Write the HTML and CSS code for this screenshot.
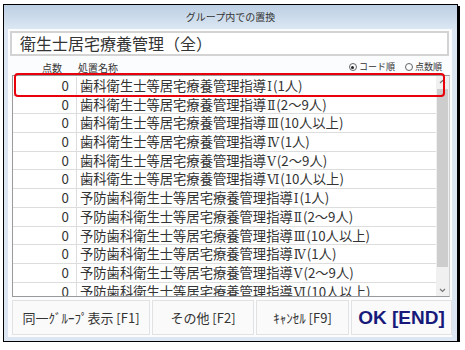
FILE: index.html
```html
<!DOCTYPE html>
<html>
<head>
    <meta charset="UTF-8">
    <title>グループ内での置換</title>
    <link rel="stylesheet" href="styles.css">
</head>
<body>
    <div class="window">
        <div class="title-bar">グループ内での置換</div>
        <div class="panel">
            <div class="group-name">衛生士居宅療養管理（全）</div>

            <div class="options">
                <span class="col-score">点数</span>
                <span class="col-name">処置名称</span>
                <span class="sort">
                    <span class="radio checked"></span>コード順
                    <span class="radio"></span>点数順
                </span>
            </div>

            <div class="list">
                <div class="rows" id="rows"></div>
                <div class="scrollbar">
                    <svg class="arrow" width="13" height="12" viewBox="0 0 13 12">
                        <polyline points="4,7 6.5,4.5 9,7" fill="none" stroke="#777" stroke-width="1.2"/>
                    </svg>
                    <div class="thumb"></div>
                    <svg class="arrow" width="13" height="12" viewBox="0 0 13 12">
                        <polyline points="4,5 6.5,7.5 9,5" fill="none" stroke="#777" stroke-width="1.2"/>
                    </svg>
                </div>
                <div class="selected"></div>
            </div>

            <div class="buttons">
                <div class="btn">同一ｸﾞﾙｰﾌﾟ表示 [F1]</div>
                <div class="btn">その他 [F2]</div>
                <div class="btn">ｷｬﾝｾﾙ [F9]</div>
                <div class="btn ok">OK [END]</div>
            </div>
        </div>
    </div>

    <script>
    const levels = [
        ['Ⅰ', '1人'], ['Ⅱ', '2～9人'], ['Ⅲ', '10人以上'],
        ['Ⅳ', '1人'], ['Ⅴ', '2～9人'], ['Ⅵ', '10人以上']
    ];
    const prefixes = ['', '予防'];
    const rows = document.getElementById('rows');

    prefixes.forEach(prefix => {
        levels.forEach(([num, people]) => {
            const row = document.createElement('div');
            row.className = 'row';
            row.innerHTML = `
                <span class="score">0</span>
                <span class="name">${prefix}歯科衛生士等居宅療養管理指導<span class="num">${num}</span>(${people})</span>
            `;
            rows.appendChild(row);
        });
    });
    </script>
</body>
</html>
```

FILE: styles.css
```css
:root {
    --frame-color: #dce7f3;
    --text-color: #333333;
    --line-color: #dddddd;
}

body {
    margin: 0;
    background: #ffffff;
    font-family: 'Noto Sans CJK JP', 'Noto Sans', sans-serif;
    color: var(--text-color);
}

.window {
    margin: 4px 0 0 3px;
    width: 453px;
    height: 336px;
    border: 1px solid #000;
    background: var(--frame-color);
    box-shadow: 2px 2px 0 #000;
    display: flex;
    flex-direction: column;
}

.title-bar {
    height: 24px;
    line-height: 24px;
    text-align: center;
    font-size: 10px;
    background: linear-gradient(#bccfe3, #dbe7f3);
}

.panel {
    margin: 0 5px 4px 4px;
    flex: 1;
    background: #fbfcfe;
    padding: 2px 0;
    display: flex;
    flex-direction: column;
}

.group-name {
    margin-left: 2px;
    width: 427px;
    height: 21px;
    border: 2px solid #d3d3d3;
    background: #fff;
    font-size: 16px;
    line-height: 21px;
    padding-left: 8px;
}

.options {
    height: 19px;
    display: flex;
    align-items: flex-end;
    font-size: 10px;
    line-height: 14px;
}

.col-score {
    margin-left: 34px;
}

.col-name {
    margin-left: 16px;
}

.sort {
    margin-left: auto;
    margin-right: 10px;
    margin-bottom: 1px;
    display: flex;
    align-items: center;
    font-size: 9px;
}

.radio {
    width: 8px;
    height: 8px;
    border: 1px solid #666;
    border-radius: 50%;
    margin: 0 2px 0 10px;
    box-sizing: border-box;
    position: relative;
}

.radio.checked::after {
    content: '';
    position: absolute;
    left: 1.5px;
    top: 1.5px;
    width: 3px;
    height: 3px;
    border-radius: 50%;
    background: #222;
}

.list {
    position: relative;
    margin-left: 4px;
    width: 436px;
    height: 220px;
    border: 1px solid #9a9a9a;
    border-right-color: #cfcfcf;
    background: #fff;
    display: flex;
}

.rows {
    flex: 1;
    overflow: hidden;
    padding-top: 1px;
}

.row {
    display: flex;
    height: 18.7px;
    box-sizing: border-box;
    border-bottom: 1px solid var(--line-color);
    font-size: 13.3px;
    line-height: 17px;
    white-space: nowrap;
}

.score {
    width: 56px;
    padding-right: 7px;
    text-align: right;
    border-right: 1px solid var(--line-color);
    flex-shrink: 0;
}

.name {
    padding-left: 3px;
}

.num {
    font-family: 'DejaVu Serif', serif;
    font-size: 12px;
    margin: 0 1px;
}

.scrollbar {
    width: 13px;
    background: #f0f0f0;
    display: flex;
    flex-direction: column;
    align-items: center;
}

.arrow {
    flex-shrink: 0;
}

.thumb {
    width: 11px;
    height: 178px;
    margin: 1px 0;
    background: #cdcdcd;
}

.scrollbar .arrow:last-child {
    margin-top: auto;
}

.selected {
    position: absolute;
    left: 1px;
    top: -3px;
    width: 427px;
    height: 20px;
    border: 2px solid #e8000b;
    border-radius: 4px;
}

.buttons {
    margin: 3px 0 0 4px;
    height: 35px;
    display: flex;
    gap: 2px;
}

.btn {
    background: #fafafa;
    border: 1px solid #e2e2e2;
    display: flex;
    align-items: center;
    justify-content: center;
    font-size: 13px;
}

.btn:nth-child(1) { width: 136px; }
.btn:nth-child(2) { width: 100px; }
.btn:nth-child(3) { width: 91px; }
.btn:nth-child(4) { flex: 1; }

.ok {
    font-family: 'Liberation Sans', sans-serif;
    font-weight: bold;
    font-size: 19px;
    color: #171a7a;
}
```
